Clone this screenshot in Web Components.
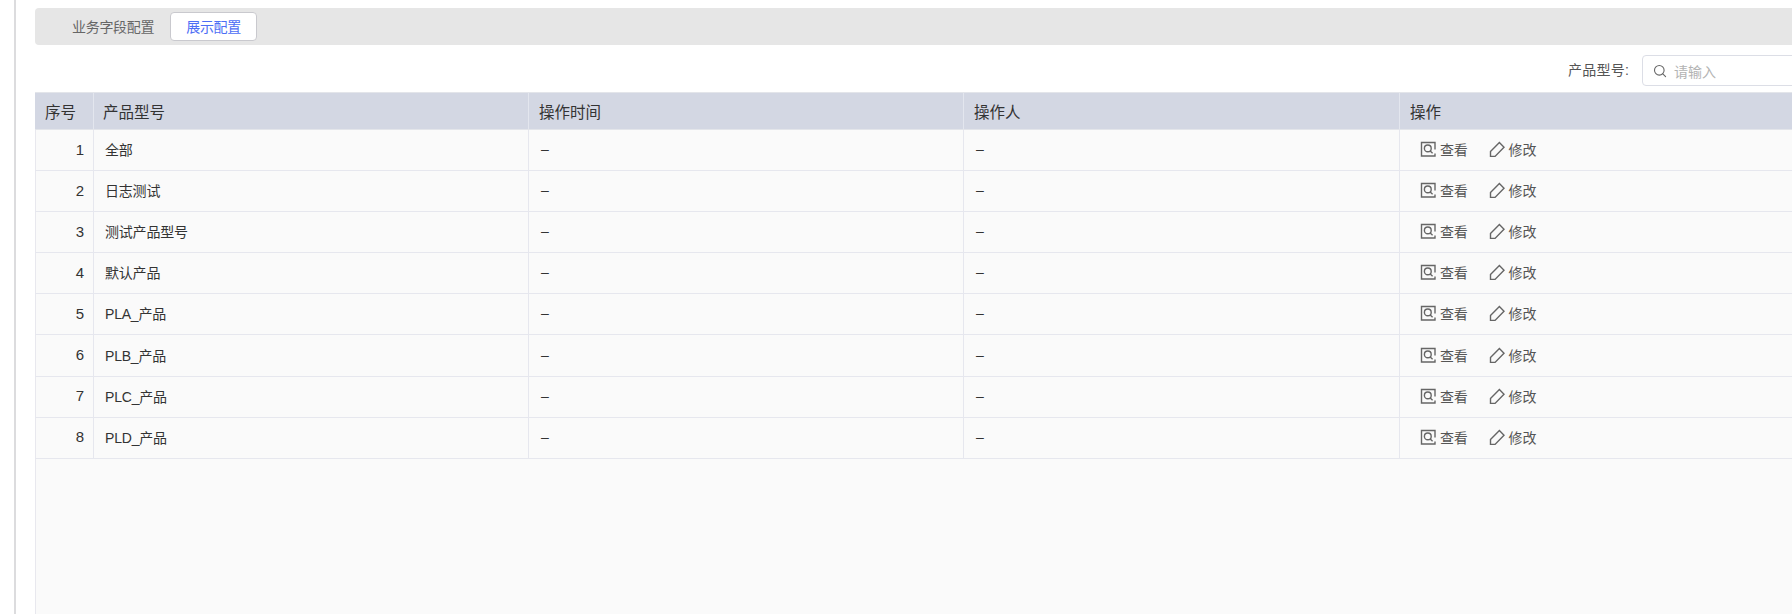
<!DOCTYPE html>
<html lang="zh">
<head>
<meta charset="utf-8">
<title>展示配置</title>
<style>
   html, body { margin: 0; height: 100%; background: #fff; overflow: hidden; }
   body { font-family: "Liberation Sans", "Noto Sans CJK SC", sans-serif; color: #333; }
</style>
</head>
<body>
<config-page>
   <tab-bar slot="tabs">
      <tab-item>业务字段配置</tab-item>
      <tab-item active>展示配置</tab-item>
   </tab-bar>
   <search-field slot="tools" label="产品型号:" placeholder="请输入"></search-field>
   <product-table slot="table">
      <product-row index="1" name="全部"></product-row>
      <product-row index="2" name="日志测试"></product-row>
      <product-row index="3" name="测试产品型号"></product-row>
      <product-row index="4" name="默认产品"></product-row>
      <product-row index="5" name="PLA_产品"></product-row>
      <product-row index="6" name="PLB_产品"></product-row>
      <product-row index="7" name="PLC_产品"></product-row>
      <product-row index="8" name="PLD_产品"></product-row>
   </product-table>
</config-page>

<script>
class ConfigPage extends HTMLElement {
   constructor () {
      super();
      this.attachShadow( { mode: 'open' } );
      this.shadowRoot.innerHTML = `
         <style>
            :host {
               display: block;
               width: 1792px;
               height: 614px;
               box-sizing: border-box;
               padding-left: 14px;
               overflow: hidden;
            }
            .main {
               height: 100%;
               box-sizing: border-box;
               border-left: 2px solid #dcdcde;
               padding: 8px 0 0 19px;
               display: flex;
               flex-direction: column;
            }
            .tools {
               display: flex;
               justify-content: flex-end;
               align-items: flex-start;
               height: 47px;
               flex: none;
            }
            .table { flex: 1; min-height: 0; display: flex; }
         </style>
         <div class="main">
            <slot name="tabs"></slot>
            <div class="tools"><slot name="tools"></slot></div>
            <div class="table"><slot name="table"></slot></div>
         </div>
      `;
   }
}

class TabBar extends HTMLElement {
   constructor () {
      super();
      this.attachShadow( { mode: 'open' } );
      this.shadowRoot.innerHTML = `
         <style>
            :host {
               display: flex;
               flex: none;
               align-items: center;
               height: 37px;
               box-sizing: border-box;
               padding-left: 28px;
               gap: 7px;
               background: #e6e6e6;
               border-radius: 4px 0 0 4px;
            }
         </style>
         <slot></slot>
      `;
   }
}

class TabItem extends HTMLElement {
   constructor () {
      super();
      this.attachShadow( { mode: 'open' } );
      this.shadowRoot.innerHTML = `
         <style>
            :host {
               display: flex;
               align-items: center;
               justify-content: center;
               height: 29px;
               box-sizing: border-box;
               padding: 0 8px 1px;
               font-size: 14px;
               letter-spacing: -0.3px;
               color: #666;
               border: 1px solid transparent;
               border-radius: 4px;
            }
            :host([active]) {
               background: #fff;
               color: #4d6ef5;
               border-color: #c9c9ce;
               padding: 0 15px 1px;
            }
         </style>
         <slot></slot>
      `;
   }
}

class SearchField extends HTMLElement {
   constructor () {
      super();
      this.attachShadow( { mode: 'open' } );
      this.shadowRoot.innerHTML = `
         <style>
            :host {
               display: flex;
               align-items: center;
               margin-top: 10px;
               height: 31px;
               font-size: 14px;
               color: #555;
            }
            .label { margin-right: 13px; padding-bottom: 3px; letter-spacing: 0.2px; }
            .box {
               width: 170px;
               margin-right: -20px;
               height: 31px;
               box-sizing: border-box;
               display: flex;
               align-items: center;
               gap: 7px;
               padding-left: 10px;
               border: 1px solid #dcdee6;
               border-radius: 4px;
               background: #fff;
               color: #b3b3b3;
            }
            svg { width: 14px; height: 14px; flex: none; }
         </style>
         <span class="label">${this.getAttribute('label')}</span>
         <div class="box">
            <svg viewBox="0 0 14 14" fill="none" stroke="#666" stroke-width="1.1" stroke-linecap="round">
               <circle cx="6.3" cy="6.3" r="4.8"/>
               <path d="M9.8 9.8 L12.6 12.6"/>
            </svg>
            <span>${this.getAttribute('placeholder')}</span>
         </div>
      `;
   }
}

const COLUMNS = '59px 435px 435px 436px 1fr';

class ProductTable extends HTMLElement {
   constructor () {
      super();
      this.attachShadow( { mode: 'open' } );
      this.shadowRoot.innerHTML = `
         <style>
            :host {
               display: block;
               flex: 1;
               min-width: 0;
               background: #fafafa;
               border-left: 1px solid #e8e8ee;
               box-sizing: border-box;
            }
            .head {
               display: grid;
               grid-template-columns: ${COLUMNS};
               height: 38px;
               box-sizing: border-box;
               margin-left: -1px;
               border-top: 1px solid #e3e5ea;
               border-bottom: 1px solid #e3e5ea;
               background: #d3d7e3;
               font-size: 15.5px;
               color: #333;
            }
            .head div {
               display: flex;
               align-items: center;
               padding: 0 0 1px 10px;
               border-right: 1px solid #e3e6ee;
               box-sizing: border-box;
            }
            .head div:nth-child(2) { padding-left: 9px; }
            .head div:last-child { border-right: 0; }
         </style>
         <div class="head">
            <div>序号</div><div>产品型号</div><div>操作时间</div><div>操作人</div><div>操作</div>
         </div>
         <slot></slot>
      `;
   }
}

class ProductRow extends HTMLElement {
   constructor () {
      super();
      this.attachShadow( { mode: 'open' } );
      this.shadowRoot.innerHTML = `
         <style>
            :host {
               display: grid;
               grid-template-columns: ${COLUMNS};
               height: 41.1px;
               box-sizing: border-box;
               margin-left: -1px;
               border-bottom: 1px solid #e6e7ee;
               font-size: 14px;
               color: #333;
            }
            .cell {
               display: flex;
               align-items: center;
               padding-left: 12px;
               border-right: 1px solid #e6e7ee;
               box-sizing: border-box;
               padding-bottom: 2px;
            }
            .index { justify-content: flex-end; padding: 0 9px 2px 0; font-size: 15px; }
            .name { padding-left: 11px; letter-spacing: -0.2px; }
            .ops { padding-left: 20px; border-right: 0; }
         </style>
         <div class="cell index">${this.getAttribute('index')}</div>
         <div class="cell name">${this.getAttribute('name')}</div>
         <div class="cell">–</div>
         <div class="cell">–</div>
         <div class="cell ops">
            <row-action icon="view">查看</row-action>
            <row-action icon="edit">修改</row-action>
         </div>
      `;
   }
}

const ACTION_ICONS = {
   view: `<path d="M15 8.5 V1.5 H1.5 V15 H15 V12.5"/>
          <circle cx="7.8" cy="7.4" r="3.4"/>
          <path d="M10.2 9.9 L12.6 12.2"/>`,
   edit: `<path d="M1.5 10.6 L10.4 1.6 L15 6.2 L6 15.4 L1.5 15.4 Z"/>`
};

class RowAction extends HTMLElement {
   constructor () {
      super();
      this.attachShadow( { mode: 'open' } );
      const icon = ACTION_ICONS[this.getAttribute('icon')];
      this.shadowRoot.innerHTML = `
         <style>
            :host {
               display: inline-flex;
               align-items: center;
               gap: 4px;
               margin-right: 21px;
               font-size: 14px;
               letter-spacing: -0.2px;
               color: #555;
            }
            svg { width: 16px; height: 16px; flex: none; }
         </style>
         <svg viewBox="0 0 16 16" fill="none" stroke="#666" stroke-width="1.4">${icon}</svg>
         <slot></slot>
      `;
   }
}

customElements.define('config-page', ConfigPage);
customElements.define('tab-bar', TabBar);
customElements.define('tab-item', TabItem);
customElements.define('search-field', SearchField);
customElements.define('product-table', ProductTable);
customElements.define('product-row', ProductRow);
customElements.define('row-action', RowAction);
</script>
</body>
</html>
